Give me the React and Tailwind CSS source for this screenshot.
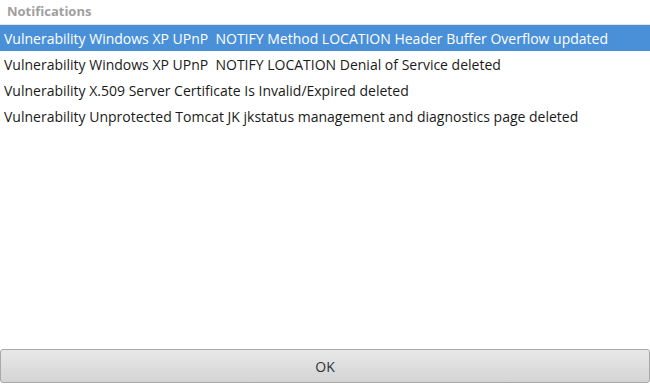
import React from "react";

const rows = [
  "Vulnerability Windows XP UPnP\u00a0\u00a0NOTIFY Method LOCATION Header Buffer Overflow updated",
  "Vulnerability Windows XP UPnP\u00a0\u00a0NOTIFY LOCATION Denial of Service deleted",
  "Vulnerability X.509 Server Certificate Is Invalid/Expired deleted",
  "Vulnerability Unprotected Tomcat JK jkstatus management and diagnostics page deleted",
];

export default function App() {
  return (
    <div
      className="w-[650px] h-[384px] bg-white flex flex-col overflow-hidden"
      style={{ fontFamily: '"Open Sans", "DejaVu Sans", sans-serif' }}
    >
      <div className="h-[24px] flex items-center px-[7px] text-[13px] font-bold text-[#a0a0a0] border-b border-[#e4e4e4] box-content">
        Notifications
      </div>
      <div className="flex-1 flex flex-col">
        {rows.map((r, i) => (
          <div
            key={i}
            className={
              "h-[26px] flex items-center px-[4px] text-[14px] whitespace-nowrap " +
              (i === 0 ? "bg-[#4a90d9] text-white" : "text-[#1a1a1a]")
            }
          >
            {r}
          </div>
        ))}
      </div>
      <button className="h-[34px] mb-[1px] mx-0 w-full rounded-[3px] border border-[#a8a8a8] bg-gradient-to-b from-[#e8e8e8] to-[#d4d4d4] text-[14px] text-[#2e3436] flex items-center justify-center">
        OK
      </button>
    </div>
  );
}
